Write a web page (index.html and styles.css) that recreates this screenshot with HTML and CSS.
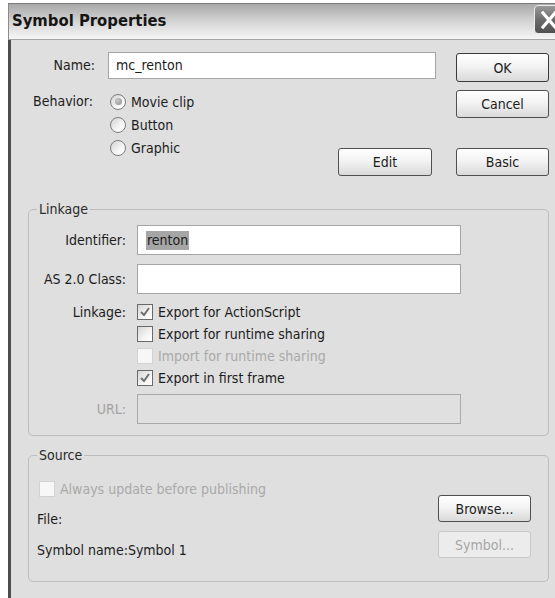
FILE: index.html
```html
<!DOCTYPE html>
<html lang="en">
<head>
<meta charset="utf-8">
<title>Symbol Properties</title>
<link rel="stylesheet" href="styles.css">
</head>
<body>
<div class="window">
  <div class="titlebar">
    <span class="title">Symbol Properties</span>
    <button class="close" aria-label="Close">
      <svg width="26" height="26" viewBox="0 0 26 26"><path d="M7 6 L19 20 M19 6 L7 20" stroke="#fff" stroke-width="3.2" stroke-linecap="square" fill="none"/></svg>
    </button>
  </div>

  <div class="body">
    <div class="top">
      <label class="lbl name-lbl">Name:</label>
      <div class="field name-field">mc_renton</div>

      <div class="side">
        <button class="btn btn-ok">OK</button>
        <button class="btn">Cancel</button>
        <button class="btn btn-basic">Basic</button>
      </div>

      <label class="lbl behavior-lbl">Behavior:</label>
      <div class="behavior">
        <div class="radios">
          <div class="radio-item"><span class="radio checked"></span><span>Movie clip</span></div>
          <div class="radio-item"><span class="radio"></span><span>Button</span></div>
          <div class="radio-item"><span class="radio"></span><span>Graphic</span></div>
        </div>
        <button class="btn btn-edit">Edit</button>
      </div>
    </div>

    <fieldset class="group linkage">
      <legend>Linkage</legend>
      <div class="lk-grid">
        <label class="lk-lbl">Identifier:</label>
        <div class="field lk-field"><span class="sel">renton</span></div>

        <label class="lk-lbl gap9">AS 2.0 Class:</label>
        <div class="field lk-field gap9"></div>

        <label class="lk-lbl check-lbl">Linkage:</label>
        <div class="checks">
          <div class="check"><span class="box on"><svg width="14" height="14" viewBox="0 0 14 14"><path d="M3 7 L6 10 L11 3" stroke="#6e6e6e" stroke-width="2" fill="none"/></svg></span><span>Export for ActionScript</span></div>
          <div class="check"><span class="box"></span><span>Export for runtime sharing</span></div>
          <div class="check disabled"><span class="box"></span><span>Import for runtime sharing</span></div>
          <div class="check"><span class="box on"><svg width="14" height="14" viewBox="0 0 14 14"><path d="M3 7 L6 10 L11 3" stroke="#6e6e6e" stroke-width="2" fill="none"/></svg></span><span>Export in first frame</span></div>
        </div>

        <label class="lk-lbl url-lbl">URL:</label>
        <div class="field lk-field url-field"></div>
      </div>
    </fieldset>

    <fieldset class="group source">
      <legend>Source</legend>
      <div class="src">
        <div class="src-left">
          <div class="check disabled always"><span class="box"></span><span>Always update before publishing</span></div>
          <div class="src-row file-row">File:</div>
          <div class="src-row name-row">Symbol name:Symbol 1</div>
        </div>
        <div class="src-right">
          <button class="btn btn-src">Browse...</button>
          <button class="btn btn-src" disabled>Symbol...</button>
        </div>
      </div>
    </fieldset>
  </div>
</div>
</body>
</html>
```

FILE: styles.css
```css
* { box-sizing: border-box; }

html, body {
  margin: 0;
  padding: 0;
  width: 555px;
  height: 598px;
  overflow: hidden;
  background: #ffffff;
}

body {
  font-family: "DejaVu Sans Condensed", "DejaVu Sans", sans-serif;
  font-stretch: condensed;
  font-size: 14px;
  color: #1c1c1c;
}

/* dialog frame */
.window {
  margin: 3px 0 0 8px;
  width: 556px;
  height: 620px;
  display: flex;
  flex-direction: column;
  background: #dfdfdf;
  border-top: 1px solid #7a7a7a;
}

.titlebar {
  height: 36px;
  display: flex;
  align-items: center;
  padding-left: 3px;
  background: linear-gradient(#a8a8a8, #d0d0d0 45%, #ececec 85%, #f6f6f6);
  border-left: 1px solid #8c8c8c;
  border-bottom: 1px solid #a4a4a4;
}

.title {
  font-weight: bold;
  font-size: 16.5px;
  color: #151515;
  margin-top: -2px;
}

.close {
  margin-left: auto;
  width: 30px;
  height: 29px;
  padding: 0;
  border: 1px solid #ececec;
  border-radius: 4px;
  background: linear-gradient(#9a9a9a, #6c6c6c 50%, #505050);
  display: flex;
  align-items: center;
  justify-content: center;
  margin-top: -4px;
}

.body {
  flex: 1;
  border-left: 3px solid #4c4c4c;
  padding-bottom: 20px;
}

/* name / behavior / command buttons */
.top {
  display: grid;
  grid-template-columns: 97px 348px 93px;
  grid-template-rows: auto auto;
  row-gap: 11px;
  padding-top: 12px;
}

.lbl {
  text-align: right;
  padding-right: 13px;
  line-height: 27px;
}

.behavior-lbl {
  line-height: 23px;
  padding-right: 15px;
  align-self: start;
}

.field {
  background: #ffffff;
  border: 1px solid #a4a4a4;
  padding-left: 7px;
}

.name-field {
  width: 328px;
  height: 27px;
  line-height: 25px;
}

.side {
  grid-column: 3;
  grid-row: 1 / span 2;
  display: flex;
  flex-direction: column;
  gap: 8px;
}

.btn {
  font: inherit;
  color: #1c1c1c;
  width: 93px;
  height: 28px;
  padding: 0;
  border: 1px solid #505050;
  border-radius: 3px;
  background: linear-gradient(#ffffff, #f3f3f3 45%, #dadada);
}

.btn-ok {
  margin-top: 1px;
  height: 29px;
  border-color: #3a3a3a;
}

.btn-basic { margin-top: auto; }

.behavior {
  grid-column: 2;
  min-height: 86px;
  display: flex;
  justify-content: space-between;
  align-items: flex-end;
}

.radios {
  margin-left: 2px;
  align-self: flex-start;
}

.radio-item {
  height: 23px;
  display: flex;
  align-items: center;
  gap: 5px;
}

.radio {
  width: 16px;
  height: 16px;
  border-radius: 50%;
  border: 1px solid #7c7c7c;
  background: linear-gradient(135deg, #d2d2d2, #f6f6f6 60%, #ffffff);
  display: flex;
  align-items: center;
  justify-content: center;
}

.radio.checked::after {
  content: "";
  width: 7px;
  height: 7px;
  border-radius: 50%;
  background: radial-gradient(circle at 35% 35%, #c8c8c8, #8e8e8e);
}

.btn-edit {
  width: 94px;
  margin-right: 24px;
}

/* group boxes */
.group {
  margin: 0 0 0 17px;
  width: 521px;
  padding: 0;
  border: 1px solid #bdbdbd;
  border-radius: 5px;
  min-width: 0;
}

.group legend {
  margin-left: 8px;
  padding: 0 2px;
  line-height: 18px;
  color: #2a2a2a;
}

.linkage { margin-top: 24px; padding-bottom: 11px; }
.source { margin-top: 10px; padding-bottom: 20px; }

.lk-grid {
  display: grid;
  grid-template-columns: 108px 324px;
  padding-top: 7px;
}

.lk-lbl {
  text-align: right;
  padding-right: 11px;
  line-height: 30px;
}

.lk-field {
  height: 30px;
  padding-left: 8px;
  display: flex;
  align-items: center;
}

.gap9 { margin-top: 9px; }

.sel {
  background: #a6a6a6;
  line-height: 19px;
  padding: 0 1px;
}

.check-lbl {
  margin-top: 7px;
  line-height: 22px;
}

.checks { margin-top: 7px; }

.check {
  height: 22px;
  display: flex;
  align-items: center;
  gap: 5px;
}

.box {
  width: 16px;
  height: 16px;
  border: 1px solid #6a6a6a;
  background: linear-gradient(135deg, #d6d6d6, #f4f4f4 60%, #ffffff);
  display: flex;
  align-items: center;
  justify-content: center;
}

.check.disabled { color: #a9a9a9; }
.check.disabled .box {
  border-color: #d2d2d2;
  background: #f7f7f7;
}

.url-lbl {
  margin-top: 5px;
  color: #a2a2a2;
}

.url-field {
  margin-top: 5px;
  background: #e0e0e0;
  border-color: #a8a8a8;
}

/* source box */
.src {
  display: flex;
  justify-content: space-between;
}

.src-left {
  padding-left: 8px;
  padding-top: 14px;
}

.always { margin-left: 2px; }

.src-row {
  height: 22px;
  line-height: 22px;
}

.file-row { margin-top: 8px; }
.name-row { margin-top: 9px; }

.src-right {
  margin-top: 31px;
  margin-right: 17px;
  display: flex;
  flex-direction: column;
  gap: 9px;
}

.btn-src {
  width: 93px;
  height: 27px;
}

.btn-src:disabled {
  color: #a6a6a6;
  border-color: #c8c8c8;
  background: #ececec;
}
```
